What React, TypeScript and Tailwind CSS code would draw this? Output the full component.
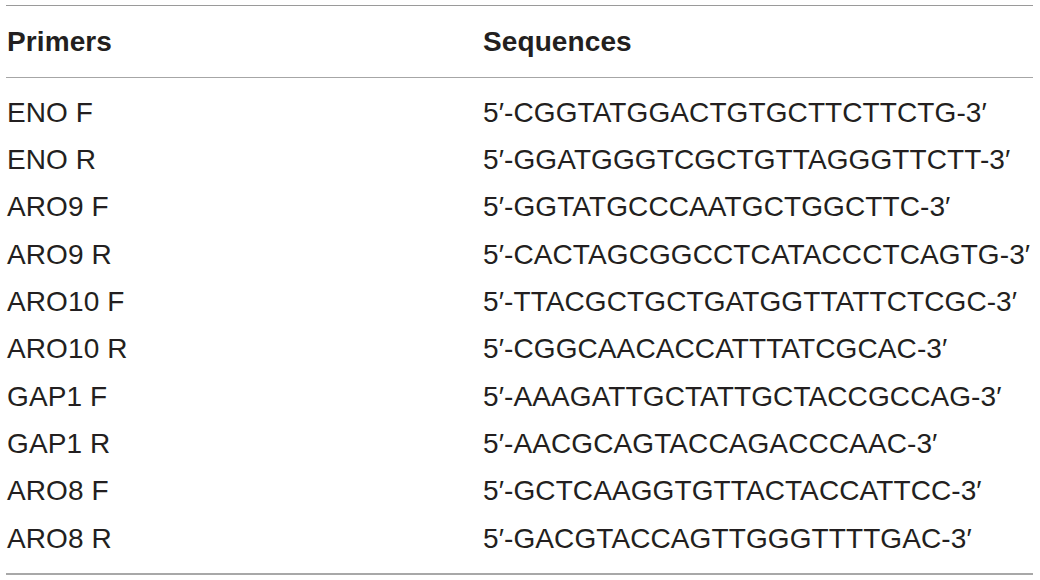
const rows: [string, string][] = [
  ["ENO F", "5′-CGGTATGGACTGTGCTTCTTCTG-3′"],
  ["ENO R", "5′-GGATGGGTCGCTGTTAGGGTTCTT-3′"],
  ["ARO9 F", "5′-GGTATGCCCAATGCTGGCTTC-3′"],
  ["ARO9 R", "5′-CACTAGCGGCCTCATACCCTCAGTG-3′"],
  ["ARO10 F", "5′-TTACGCTGCTGATGGTTATTCTCGC-3′"],
  ["ARO10 R", "5′-CGGCAACACCATTTATCGCAC-3′"],
  ["GAP1 F", "5′-AAAGATTGCTATTGCTACCGCCAG-3′"],
  ["GAP1 R", "5′-AACGCAGTACCAGACCCAAC-3′"],
  ["ARO8 F", "5′-GCTCAAGGTGTTACTACCATTCC-3′"],
  ["ARO8 R", "5′-GACGTACCAGTTGGGTTTTGAC-3′"],
];

export default function App() {
  return (
    <div className="w-[1040px] h-[580px] bg-white pt-[5px] px-[6px] font-['Liberation_Sans',Arial,sans-serif] text-[#231f20] text-[28px] tracking-[0.1px]">
      <div className="w-[1027px] border-t border-t-[#9a9a9a] border-b-2 border-b-[#a8a8a8]">
        <div className="flex h-[72px] items-center border-b border-b-[#a6a6a6] font-bold">
          <div className="w-[477px] pl-[1px]">Primers</div>
          <div className="flex-1">Sequences</div>
        </div>
        <div className="pt-[11px] pb-[11px]">
          {rows.map(([name, seq]) => (
            <div key={name} className="flex h-[47.33px] items-center">
              <div className="w-[477px] pl-[1px]">{name}</div>
              <div className="flex-1">{seq}</div>
            </div>
          ))}
        </div>
      </div>
    </div>
  );
}
